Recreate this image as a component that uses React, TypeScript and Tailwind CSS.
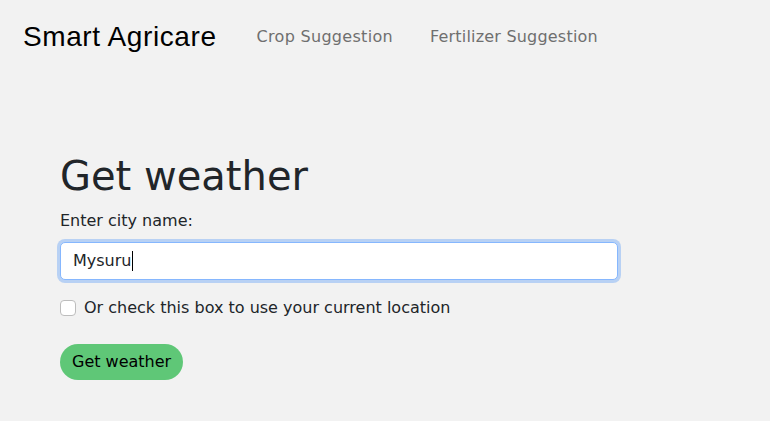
export default function App() {
  return (
    <div className="min-h-[421px] w-full bg-[#f2f2f2] font-['DejaVu_Sans',sans-serif] text-[#212529]">
      <nav className="flex h-[73px] items-center pl-[23px]">
        <span className="text-[28px] font-['Liberation_Sans',sans-serif] tracking-[0.6px] text-black">
          Smart Agricare
        </span>
        <a className="ml-[40px] text-[16px] tracking-[0.3px] text-[#6f6f6f]">Crop Suggestion</a>
        <a className="ml-[37px] text-[16px] tracking-[0.2px] text-[#6f6f6f]">Fertilizer Suggestion</a>
      </nav>
      <main className="px-[60px] pt-[79px]">
        <h1 className="text-[40px] leading-[48px]">Get weather</h1>
        <label className="mt-[11px] block text-[16px] leading-[20px]">Enter city name:</label>
        <div className="mt-[11px] flex h-[38px] w-[558px] items-center rounded-[5px] border border-[#86b7fe] bg-white px-[12px] text-[16px] shadow-[0_0_0_3px_rgba(13,110,253,0.25)]">
          <span>Mysuru</span>
          <span className="ml-[1px] h-[20px] w-px bg-black" />
        </div>
        <div className="mt-[16px] flex items-center gap-[8px]">
          <span className="h-[16px] w-[16px] rounded-[4px] border border-[#bdbdbd] bg-white" />
          <span className="text-[16px]">Or check this box to use your current location</span>
        </div>
        <button className="mt-[24px] h-[36px] rounded-full bg-[#5fc777] px-[12px] text-[16px] text-black">
          Get weather
        </button>
      </main>
    </div>
  )
}
